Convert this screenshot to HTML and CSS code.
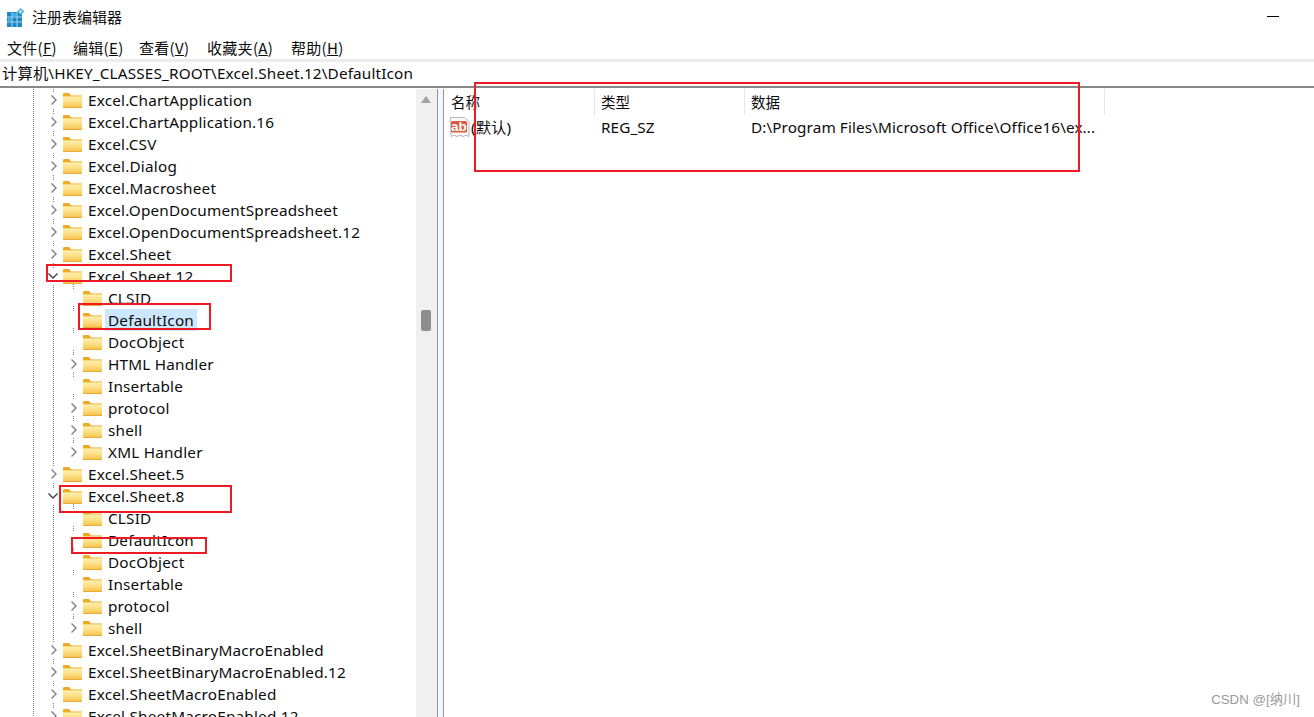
FILE: index.html
```html
<!DOCTYPE html>
<html lang="zh-CN">
<head>
<meta charset="utf-8">
<title>注册表编辑器</title>
<link rel="stylesheet" href="styles.css">
</head>
<body>
<svg class="defs" width="0" height="0" aria-hidden="true">
  <defs>
    <linearGradient id="fg" x1="0" y1="0" x2="0" y2="1">
      <stop offset="0" stop-color="#fff0b4"/>
      <stop offset="0.55" stop-color="#fddc7c"/>
      <stop offset="1" stop-color="#f6bf48"/>
    </linearGradient>
    <symbol id="folder" viewBox="0 0 19 15">
      <path d="M0 1.500C0 .7.5 0 1.200 0H6l2 2.500h11V5H0z" fill="#eeaa22"/>
      <rect x="0" y="3.500" width="19" height="11.500" fill="url(#fg)"/>
      <path d="M0 3.500h19" stroke="#f7d67a" stroke-width="1"/>
      <path d="M0 14.500h19" stroke="#e8ac35" stroke-width="1"/>
    </symbol>
    <symbol id="closed" viewBox="0 0 16 16">
      <path d="M5.500 3.500L10 8l-4.500 4.500" fill="none" stroke="#7f7f7f" stroke-width="1.400"/>
    </symbol>
    <symbol id="open" viewBox="0 0 16 16">
      <path d="M2.500 5.500L7 10l4.500-4.500" fill="none" stroke="#404040" stroke-width="1.400"/>
    </symbol>
  </defs>
</svg>

<div class="app">
  <header class="titlebar">
    <svg class="appicon" width="18" height="20" viewBox="0 0 18 20">
      <rect x="0" y="4" width="15" height="15" fill="#1c86c8"/>
      <path d="M5 4v15M10 4v15M0 9h15M0 14h15" stroke="#a5d8ef" stroke-width="1"/>
      <rect x="1" y="10" width="3" height="3" fill="#35aee0"/>
      <rect x="6" y="5" width="3" height="3" fill="#35aee0"/>
      <path d="M13.500 0l4 3.500-4 3.500-3.500-3.500z" fill="#5bb5de"/>
      <path d="M13.500 2l1.500 1.500-1.500 1.500-1.500-1.500z" fill="#d8f0fa"/>
    </svg>
    <span class="apptitle">注册表编辑器</span>
    <span class="minimize"></span>
  </header>

  <nav class="menubar">
    <span class="menu m1">文件(<u>F</u>)</span>
    <span class="menu m2">编辑(<u>E</u>)</span>
    <span class="menu m3">查看(<u>V</u>)</span>
    <span class="menu m4">收藏夹(<u>A</u>)</span>
    <span class="menu m5">帮助(<u>H</u>)</span>
  </nav>

  <div class="address">计算机\HKEY_CLASSES_ROOT\Excel.Sheet.12\DefaultIcon</div>

  <main class="panes">
    <section class="treepane">
      <div class="tree">
        <svg class="treelines" width="416" height="630" viewBox="0 0 416 630" aria-hidden="true">
          <g fill="none" stroke="#808080" stroke-width="1" stroke-dasharray="1 1">
            <path d="M33.500 0V630"/>
            <path d="M53.500 0V630"/>
            <path d="M73.500 197V365M73.500 417V540"/>
            <path d="M74 210h9M74 232h9M74 254h9M74 298h9M74 430h9M74 452h9M74 474h9M74 496h9"/>
          </g>
        </svg>
        <div class="row l1"><svg class="chev"><use href="#closed"/></svg><svg class="fold"><use href="#folder"/></svg><span class="label">Excel.ChartApplication</span></div>
        <div class="row l1"><svg class="chev"><use href="#closed"/></svg><svg class="fold"><use href="#folder"/></svg><span class="label">Excel.ChartApplication.16</span></div>
        <div class="row l1"><svg class="chev"><use href="#closed"/></svg><svg class="fold"><use href="#folder"/></svg><span class="label">Excel.CSV</span></div>
        <div class="row l1"><svg class="chev"><use href="#closed"/></svg><svg class="fold"><use href="#folder"/></svg><span class="label">Excel.Dialog</span></div>
        <div class="row l1"><svg class="chev"><use href="#closed"/></svg><svg class="fold"><use href="#folder"/></svg><span class="label">Excel.Macrosheet</span></div>
        <div class="row l1"><svg class="chev"><use href="#closed"/></svg><svg class="fold"><use href="#folder"/></svg><span class="label">Excel.OpenDocumentSpreadsheet</span></div>
        <div class="row l1"><svg class="chev"><use href="#closed"/></svg><svg class="fold"><use href="#folder"/></svg><span class="label">Excel.OpenDocumentSpreadsheet.12</span></div>
        <div class="row l1"><svg class="chev"><use href="#closed"/></svg><svg class="fold"><use href="#folder"/></svg><span class="label">Excel.Sheet</span></div>
        <div class="row l1"><svg class="chev"><use href="#open"/></svg><svg class="fold"><use href="#folder"/></svg><span class="label">Excel.Sheet.12</span></div>
        <div class="row l2"><span class="chev"></span><svg class="fold"><use href="#folder"/></svg><span class="label">CLSID</span></div>
        <div class="row l2"><span class="chev"></span><svg class="fold"><use href="#folder"/></svg><span class="label selected">DefaultIcon</span></div>
        <div class="row l2"><span class="chev"></span><svg class="fold"><use href="#folder"/></svg><span class="label">DocObject</span></div>
        <div class="row l2"><svg class="chev"><use href="#closed"/></svg><svg class="fold"><use href="#folder"/></svg><span class="label">HTML Handler</span></div>
        <div class="row l2"><span class="chev"></span><svg class="fold"><use href="#folder"/></svg><span class="label">Insertable</span></div>
        <div class="row l2"><svg class="chev"><use href="#closed"/></svg><svg class="fold"><use href="#folder"/></svg><span class="label">protocol</span></div>
        <div class="row l2"><svg class="chev"><use href="#closed"/></svg><svg class="fold"><use href="#folder"/></svg><span class="label">shell</span></div>
        <div class="row l2"><svg class="chev"><use href="#closed"/></svg><svg class="fold"><use href="#folder"/></svg><span class="label">XML Handler</span></div>
        <div class="row l1"><svg class="chev"><use href="#closed"/></svg><svg class="fold"><use href="#folder"/></svg><span class="label">Excel.Sheet.5</span></div>
        <div class="row l1"><svg class="chev"><use href="#open"/></svg><svg class="fold"><use href="#folder"/></svg><span class="label">Excel.Sheet.8</span></div>
        <div class="row l2"><span class="chev"></span><svg class="fold"><use href="#folder"/></svg><span class="label">CLSID</span></div>
        <div class="row l2"><span class="chev"></span><svg class="fold"><use href="#folder"/></svg><span class="label">DefaultIcon</span></div>
        <div class="row l2"><span class="chev"></span><svg class="fold"><use href="#folder"/></svg><span class="label">DocObject</span></div>
        <div class="row l2"><span class="chev"></span><svg class="fold"><use href="#folder"/></svg><span class="label">Insertable</span></div>
        <div class="row l2"><svg class="chev"><use href="#closed"/></svg><svg class="fold"><use href="#folder"/></svg><span class="label">protocol</span></div>
        <div class="row l2"><svg class="chev"><use href="#closed"/></svg><svg class="fold"><use href="#folder"/></svg><span class="label">shell</span></div>
        <div class="row l1"><svg class="chev"><use href="#closed"/></svg><svg class="fold"><use href="#folder"/></svg><span class="label">Excel.SheetBinaryMacroEnabled</span></div>
        <div class="row l1"><svg class="chev"><use href="#closed"/></svg><svg class="fold"><use href="#folder"/></svg><span class="label">Excel.SheetBinaryMacroEnabled.12</span></div>
        <div class="row l1"><svg class="chev"><use href="#closed"/></svg><svg class="fold"><use href="#folder"/></svg><span class="label">Excel.SheetMacroEnabled</span></div>
        <div class="row l1"><svg class="chev"><use href="#closed"/></svg><svg class="fold"><use href="#folder"/></svg><span class="label">Excel.SheetMacroEnabled.12</span></div>
      </div>
      <div class="scrollbar">
        <span class="arrow"></span>
        <span class="thumb"></span>
      </div>
    </section>
    <div class="splitter"></div>
    <section class="listpane">
      <div class="listhead">
        <div class="col c1">名称</div>
        <div class="col c2">类型</div>
        <div class="col c3">数据</div>
      </div>
      <div class="listrow">
        <div class="cell c1 namecell">
          <svg class="abicon" width="22" height="22" viewBox="0 0 22 22">
            <path d="M1.500 1.500H15.500l4.500 4v15l-3-1.200-3 1.200-3-1.200-3 1.200-3-1.200-3 1.200z" fill="#f8f8f8" stroke="#b8b8b8" stroke-width="1"/>
            <rect x="2" y="5" width="16" height="11.500" rx="1.500" fill="#dd5a3c"/>
            <text class="abtext" x="10" y="15" text-anchor="middle">ab</text>
          </svg>
          <span>(默认)</span>
        </div>
        <div class="cell c2">REG_SZ</div>
        <div class="cell c3">D:\Program Files\Microsoft Office\Office16\ex...</div>
      </div>
    </section>
  </main>
</div>

<div class="mark mark-list"></div>
<div class="mark mark-sheet12"></div>
<div class="mark mark-icon12"></div>
<div class="mark mark-sheet8"></div>
<div class="mark mark-icon8"></div>
<div class="watermark">CSDN @[纳川]</div>
</body>
</html>
```

FILE: styles.css
```css
* { box-sizing: border-box; }
html, body { margin: 0; height: 100%; overflow: hidden; background: #fff; }
body {
  font-family: "Noto Sans", "Noto Sans CJK SC", sans-serif;
  font-size: 15.3px;
  letter-spacing: .2px;
  color: #0c0c0c;
  position: relative;
}
.defs { display: block; height: 0; }
.app { display: flex; flex-direction: column; height: 717px; width: 1314px; }

.titlebar { height: 36px; display: flex; align-items: center; padding-left: 7px; position: relative; flex: none; }
.appicon { margin-right: 7px; flex: none; }
.apptitle { font-family: "Noto Sans CJK SC", sans-serif; font-size: 15px; letter-spacing: 0; margin-top: -4px; }
.minimize { width: 12px; height: 1px; background: #000; margin-left: auto; margin-right: 35px; margin-top: -4px; }

.menubar { height: 23px; display: flex; align-items: center; flex: none; font-family: "Noto Sans CJK SC", sans-serif; font-size: 15px; letter-spacing: .3px; }
.menu { white-space: nowrap; line-height: 22px; }
.m1 { margin-left: 7px; width: 66px; }
.m2 { width: 66px; }
.m3 { width: 68px; }
.m4 { width: 84px; }

.address {
  height: 29px;
  flex: none;
  border-top: 3px solid #ececec;
  border-bottom: 2px solid #888;
  padding-left: 2px;
  line-height: 22px;
  white-space: nowrap;
  letter-spacing: .16px;
}

.panes { flex: 1; display: flex; min-height: 0; padding-top: 1px; }
.treepane { width: 437px; flex: none; display: flex; min-height: 0; }
.tree { width: 416px; position: relative; overflow: hidden; flex: none; }
.treelines { position: absolute; left: 0; top: -2px; }
.row { height: 22px; display: flex; align-items: center; position: relative; white-space: nowrap; }
.l1 { padding-left: 45px; }
.l2 { padding-left: 65px; }
.chev { width: 18px; height: 16px; flex: none; background: #fff; }
.fold { width: 19px; height: 15px; flex: none; background: #fff; }
.label { margin-left: 3px; padding: 0 3px; line-height: 22px; background: #fff; }
.label.selected { background: #cce8ff; }

.scrollbar { width: 21px; background: #f0f0f0; position: relative; flex: none; }
.arrow { position: absolute; left: 5px; top: 7px; width: 0; height: 0; border-left: 5px solid transparent; border-right: 5px solid transparent; border-bottom: 7px solid #a3a3a3; }
.thumb { position: absolute; left: 5px; top: 221px; width: 10px; height: 21px; background: #8f8f8f; border-radius: 2px; }

.splitter { width: 7px; flex: none; border-left: 1px solid #8c96a0; border-right: 1px solid #8c96a0; background: #f4f6f8; }

.listpane { flex: 1; min-width: 0; }
.listhead { display: flex; height: 26px; font-family: "Noto Sans CJK SC", sans-serif; font-size: 14.5px; letter-spacing: 0; }
.listrow { display: flex; height: 24px; letter-spacing: .1px; }
.col { line-height: 26px; border-right: 1px solid #e5e5e5; }
.c1 { width: 151px; padding-left: 7px; }
.c2 { width: 150px; padding-left: 6px; }
.c3 { width: 360px; padding-left: 6px; white-space: nowrap; }
.cell { line-height: 24px; }
.namecell { display: flex; align-items: center; padding-left: 5px; }
.abicon { flex: none; }
.abtext { font-family: "Liberation Sans", sans-serif; font-weight: 700; font-size: 13.5px; fill: #fff; letter-spacing: 0; }

.mark { position: absolute; border: 2px solid #ed1c24; pointer-events: none; }
.mark-list { left: 474px; top: 82px; width: 606px; height: 90px; }
.mark-sheet12 { left: 46px; top: 264px; width: 186px; height: 18px; }
.mark-icon12 { left: 78px; top: 303px; width: 133px; height: 27px; }
.mark-sheet8 { left: 59px; top: 485px; width: 173px; height: 28px; }
.mark-icon8 { left: 71px; top: 537px; width: 136px; height: 17px; }

.watermark { position: absolute; right: 14px; top: 689px; font-family: "Liberation Sans", "Noto Sans CJK SC", sans-serif; font-size: 13.3px; letter-spacing: 0; color: #9a9a9a; background: rgba(255,255,255,.6); }
```
